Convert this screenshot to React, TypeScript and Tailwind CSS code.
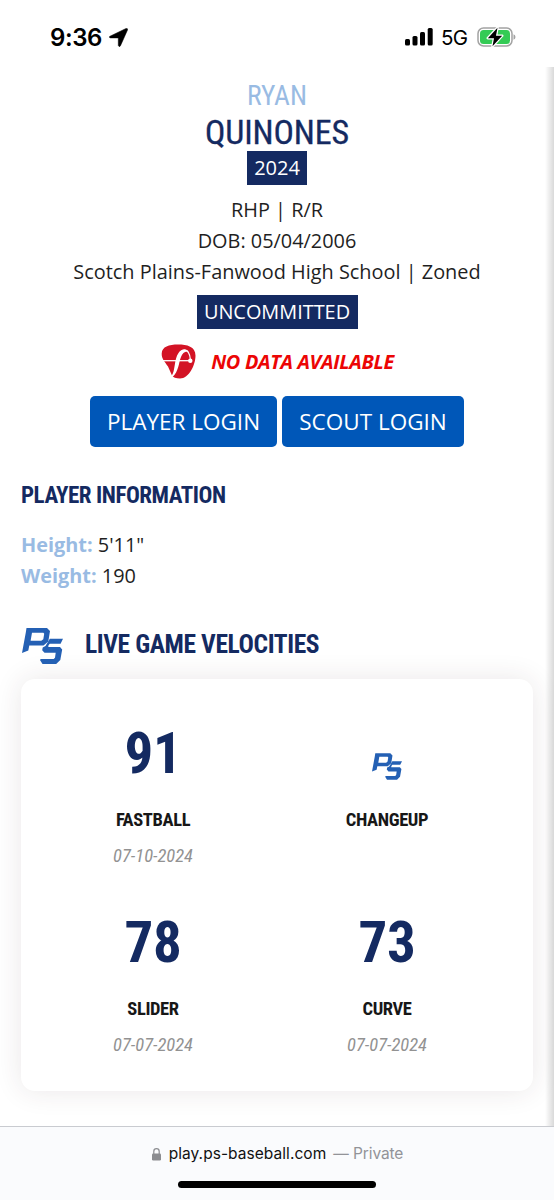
import React from "react";

const condensed =
  "[font-family:'Roboto_Condensed',Roboto,sans-serif] [font-stretch:75%]";

function PSLogo({ className }: { className: string }) {
  return (
    <svg viewBox="0 0 41 36" className={className} fill="#2460b4" aria-hidden="true">
      <path
        fillRule="evenodd"
        d="M4.500 0H25L28 3L26.300 13.500L21.500 17.500H7.300L6.300 22.500L0 25L3.800 4.500ZM10 4.800L8.600 12.800H19.300L21.300 11.300L22.200 5.800L21.400 4.800Z"
      />
      <path d="M27.800 10.800H41L38.600 15.700H27.800L26.500 17.200L26.300 19H38L40.200 21.500L38.300 32L34.200 36H20.500L18 32L18.700 31H31.700L33 29.700L33.700 24.700H22.500L20.200 22.200L20.700 19.500L23.500 18Z" />
    </svg>
  );
}

function FlightLogo() {
  return (
    <svg width="35" height="35" viewBox="0 0 35 35" aria-hidden="true">
      <path
        d="M.7 9.500C1 2.500 8 .5 17 .5S34.500 2.500 34.500 11.500C34.500 21 28 34.500 19 34.500C15 34.500 12 33.500 11 31.500L7 22.500C4 18 .5 15 .7 9.500Z"
        fill="#d31325"
      />
      <path d="M0 16.700H29" stroke="#fff" strokeWidth="1.300" />
      <path d="M18 11C20.500 5.500 28 3 29.300 15" stroke="#fff" strokeWidth="1.200" fill="none" />
      <path d="M10.500 32C14.500 27 13 15 17.500 9C20.500 4.500 25.500 4 28 8C24.500 6.500 21.500 9 20 13C17.500 19 18 27 11.500 33Z" fill="#fff" />
      <circle cx="29.300" cy="16.700" r="2.200" fill="#fff" />
    </svg>
  );
}

function Stat({ value, label, date }: { value?: string; label: string; date?: string }) {
  return (
    <div className={`flex h-[189px] w-[234px] flex-col items-center text-center ${condensed}`}>
      <div className="flex h-[68px] items-center justify-center pt-px text-[57px] leading-[68px] font-bold tracking-[-0.4px] text-[#142a61]">
        {value ?? <PSLogo className="mt-[25px] h-[27px] w-[30px]" />}
      </div>
      <div className="mt-[20px] h-[26px] text-[18.500px] leading-[26px] font-bold tracking-[-0.38px] text-[#171717]">{label}</div>
      <div className="mt-[10px] h-[26px] text-[18.500px] leading-[26px] text-[#929292] italic">{date}</div>
    </div>
  );
}

function StatusBar() {
  return (
    <header className="flex h-[67px] items-start justify-between pt-[21px] pr-[38px] pl-[50px] [font-family:Inter,sans-serif] text-black">
      <div className="flex h-8 items-center gap-[7px]">
        <span className="pt-px text-[24px] leading-8 font-semibold tracking-[-0.4px]">9:36</span>
        <svg width="19" height="19" viewBox="0 0 19 19" aria-hidden="true">
          <path d="M1 8.200L17 .5Q19 .1 18.500 2L11.500 17.700Q10.300 19.700 9.300 17.500V9.900H1.500Q-.9 9.200 1 8.200Z" stroke="#000" strokeWidth=".5" />
        </svg>
      </div>
      <div className="flex h-8 items-center">
        <svg width="28" height="18" viewBox="0 0 28 18" aria-hidden="true">
          <rect x="0" y="11" width="5" height="6.500" rx="1.500" />
          <rect x="7.500" y="8" width="5" height="9.500" rx="1.500" />
          <rect x="15" y="4" width="5" height="13.500" rx="1.500" />
          <rect x="22.700" y="0" width="5" height="17.500" rx="1.500" />
        </svg>
        <span className="ml-[8px] w-[28px] pt-px text-[20.500px] leading-8 tracking-[-0.8px]">5G</span>
        <svg className="ml-[8px]" width="39" height="20" viewBox="0 0 39 20" aria-hidden="true">
          <rect x="1" y="1" width="34" height="18" rx="5.500" fill="#fff" stroke="#a3a3a3" strokeWidth="1.500" />
          <rect x="3" y="3" width="30" height="14" rx="3.500" fill="#34cb55" />
          <path d="M36.500 7.200Q38.500 8 38.500 10T36.500 12.800Z" fill="#a3a3a3" />
          <path d="M20.500 .7L10.800 11.200H17L15.500 19.300L25.200 8.700H19Z" stroke="#fff" strokeWidth="2.500" strokeLinejoin="round" paintOrder="stroke" />
        </svg>
      </div>
    </header>
  );
}

export default function App() {
  return (
    <div className="relative flex h-[1200px] w-[554px] flex-col overflow-hidden bg-white [font-family:'Open_Sans',sans-serif] text-[#1f1f1f]">
      <StatusBar />
      <main className="relative flex h-[1059px] flex-col overflow-hidden">
        <section className="flex flex-col items-center text-center">
          <div className={`mt-[10px] h-[36px] pt-px text-[27.500px] leading-[36px] text-[#99bbe3] ${condensed}`}>RYAN</div>
          <h1 className={`h-[38px] text-[34px] leading-[38px] tracking-[-0.15px] text-[#142a61] [-webkit-text-stroke:0.3px_#142a61] ${condensed}`}>QUINONES</h1>
          <div className="flex h-[34px] w-[60px] items-center justify-center bg-[#142a61] text-[20px] text-white">2024</div>
          <div className="mt-[9px] text-[19.900px] leading-[31px]">
            <p>RHP | R/R</p>
            <p>DOB: 05/04/2006</p>
            <p>Scotch Plains-Fanwood High School | Zoned</p>
          </div>
          <div className="mt-[8px] flex h-[34px] w-[161px] items-center justify-center bg-[#142a61] text-[19.900px] text-white">UNCOMMITTED</div>
          <div className="mt-[15px] flex h-[35px] items-center gap-[15px] pl-px">
            <FlightLogo />
            <span className="text-[19.900px] font-bold tracking-[-0.32px] text-[#ec0505] italic">NO DATA AVAILABLE</span>
          </div>
          <div className="mt-[17px] flex gap-[5px] text-[22.500px] leading-[51px] text-white">
            <button className="h-[51px] w-[187px] rounded-[5px] bg-[#0057b8]">PLAYER LOGIN</button>
            <button className="h-[51px] w-[182px] rounded-[5px] bg-[#0057b8]">SCOUT LOGIN</button>
          </div>
        </section>
        <section className="mt-[32px] px-[21px]">
          <h2 className={`h-[32px] pt-px text-[23px] leading-[32px] font-bold tracking-[-0.45px] text-[#142a61] ${condensed}`}>PLAYER INFORMATION</h2>
          <div className="mt-[18px] text-[19.900px] leading-[31px]">
            <p><b className="text-[#99bbe3]">Height:</b> 5'11"</p>
            <p><b className="text-[#99bbe3]">Weight:</b> 190</p>
          </div>
        </section>
        <section className="mt-[37px] px-[21px]">
          <div className="flex h-[36px] items-center gap-[22px] pl-[1px]">
            <PSLogo className="h-[36px] w-[41px]" />
            <h2 className={`pb-[4px] text-[25.500px] leading-[36px] font-bold tracking-[-0.4px] text-[#142a61] ${condensed}`}>LIVE GAME VELOCITIES</h2>
          </div>
          <div className="mt-[15px] grid h-[412px] grid-cols-[234px_234px] content-start rounded-[14px] bg-white pt-[40px] pl-[15px] shadow-[0_0_28px_rgba(60,40,45,0.11)]">
            <Stat value="91" label="FASTBALL" date="07-10-2024" />
            <Stat label="CHANGEUP" />
            <Stat value="78" label="SLIDER" date="07-07-2024" />
            <Stat value="73" label="CURVE" date="07-07-2024" />
          </div>
        </section>
        <div className="absolute top-0 right-0 h-full w-[9px] bg-linear-to-r from-transparent to-black/15" />
      </main>
      <footer className="flex h-[74px] flex-col items-center border-t border-[#c9cbd0] bg-[#fafbfd] [font-family:Inter,sans-serif]">
        <div className="mt-[14px] flex h-[26px] items-center pl-px text-[15.500px] leading-[26px]">
          <svg width="9" height="13" viewBox="0 0 9 13" aria-hidden="true">
            <rect y="5.500" width="9" height="7" rx="1.200" fill="#8b8c90" />
            <path d="M1.800 6V3.400A2.700 2.700 0 0 1 7.200 3.400V6" fill="none" stroke="#8b8c90" strokeWidth="1.200" />
          </svg>
          <span className="ml-[8px] tracking-[0.05px] text-[#111]">play.ps-baseball.com</span>
          <span className="ml-[7px] tracking-[-0.1px] text-[#929398]">— Private</span>
        </div>
        <div className="mt-[14px] h-[7px] w-[198px] rounded-full bg-black" />
      </footer>
    </div>
  );
}
